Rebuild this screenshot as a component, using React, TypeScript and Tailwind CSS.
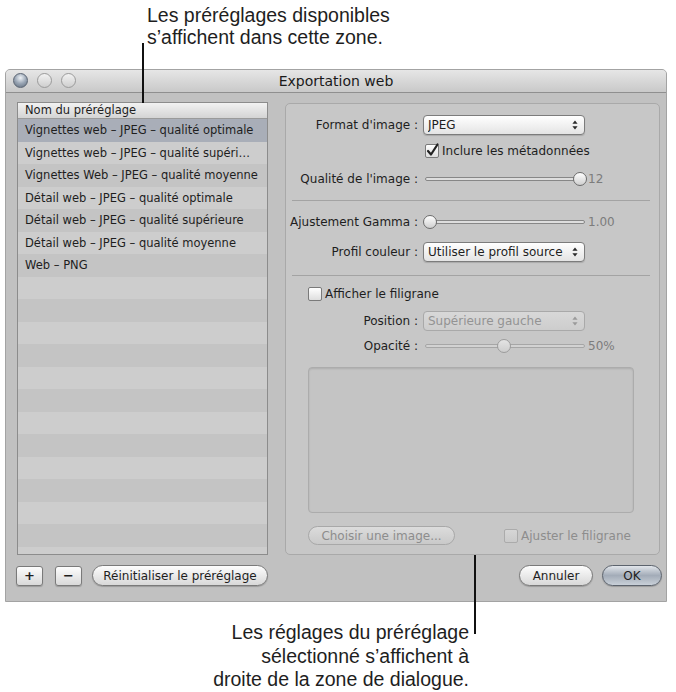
import React from 'react'

const UI = "font-['DejaVu_Sans','Liberation_Sans',sans-serif] text-[12px] text-[#1e1e1e]"

const presets = [
  'Vignettes web – JPEG – qualité optimale',
  'Vignettes web – JPEG – qualité supéri…',
  'Vignettes Web – JPEG – qualité moyenne',
  'Détail web – JPEG – qualité optimale',
  'Détail web – JPEG – qualité supérieure',
  'Détail web – JPEG – qualité moyenne',
  'Web – PNG',
]

export default function App() {
  const rows = [...presets, ...Array.from({ length: 14 }, () => '')]
  return (
    <div className="relative w-[676px] h-[692px] bg-white overflow-hidden">
      {/* top callout */}
      <div className="h-[69px] pl-[147px] pt-[4px] font-['Liberation_Sans',Arial,sans-serif] text-[19.5px] leading-[22px] text-[#1e1e1e]">
        <p>Les préréglages disponibles</p>
        <p>s’affichent dans cette zone.</p>
      </div>

      {/* window */}
      <div className={`ml-[5px] w-[662px] h-[533px] flex flex-col bg-[#c1c1c1] border border-[#a3a3a3] rounded-t-[5px] ${UI}`}>
        <div className="h-[23px] shrink-0 grid grid-cols-[1fr_auto_1fr] items-center border-b border-[#8f8f8f] rounded-t-[4px] bg-linear-to-b from-[#e6e6e6] to-[#c9c9c9]">
          <div className="flex gap-[9px] pl-[7px] -mt-[2px]">
            <span className="w-[15px] h-[15px] rounded-full border border-[#5b6573] bg-[radial-gradient(circle_at_50%_30%,#eef2f6_0%,#9aa6b5_50%,#5f6b7b_100%)]" />
            <span className="w-[15px] h-[15px] rounded-full border border-[#9a9a9a] bg-linear-to-b from-[#f2f2f2] to-[#cfcfcf]" />
            <span className="w-[15px] h-[15px] rounded-full border border-[#9a9a9a] bg-linear-to-b from-[#f2f2f2] to-[#cfcfcf]" />
          </div>
          <div className="text-[14px] text-[#1a1a1a]">Exportation web</div>
          <div />
        </div>

        <div className="flex pt-[9px] pl-[11px] pr-[6px] gap-[17px]">
          {/* preset list */}
          <div className="w-[251px] h-[453px] border border-[#8c8c8c] bg-[#c3c3c3] overflow-hidden text-[11.5px]">
            <div className="h-[16px] border-b border-[#9a9a9a] bg-linear-to-b from-[#f2f2f2] to-[#d4d4d4] pl-[7px] leading-[15px]">
              Nom du préréglage
            </div>
            {rows.map((r, i) => (
              <div
                key={i}
                className={`h-[22.5px] leading-[22.5px] pl-[7px] pr-[2px] whitespace-nowrap overflow-hidden ${
                  i === 0 ? 'bg-[#a9aeb8]' : i % 2 === 0 ? 'bg-[#c4c4c4]' : 'bg-[#cdcdcd]'
                }`}
              >
                {r}
              </div>
            ))}
          </div>

          {/* settings group */}
          <div className="mt-[1px] w-[375px] h-[452px] rounded-[5px] border border-[#a9a9a9] bg-[#c7c7c7] pt-[11px]">
            <Row className="h-[20px]" label="Format d'image :">
              <PopUp value="JPEG" />
            </Row>
            <div className="mt-[8px] h-[16px] pl-[139px] flex items-center gap-[3px]">
              <CheckBox checked />
              <span>Inclure les métadonnées</span>
            </div>
            <Row className="mt-[12px] h-[16px]" label="Qualité de l'image :">
              <Slider knob="left-[150px]" />
              <Value>12</Value>
            </Row>
            <Sep />
            <Row className="mt-[13px] h-[16px]" label="Ajustement Gamma :">
              <Slider knob="left-0" />
              <Value>1.00</Value>
            </Row>
            <Row className="mt-[12px] h-[20px]" label="Profil couleur :">
              <PopUp value="Utiliser le profil source" />
            </Row>
            <Sep />
            <div className="mt-[10px] h-[16px] pl-[22px] flex items-center gap-[3px]">
              <CheckBox />
              <span>Afficher le filigrane</span>
            </div>
            <Row className="mt-[9px] h-[20px]" label="Position :">
              <PopUp value="Supérieure gauche" disabled />
            </Row>
            <Row className="mt-[7px] h-[16px]" label="Opacité :">
              <Slider knob="left-[74px]" disabled />
              <Value>50%</Value>
            </Row>
            <div className="mt-[13px] ml-[22px] w-[326px] h-[146px] rounded-[4px] border border-[#acacac] bg-[#c4c4c4] shadow-[inset_0_1px_2px_rgba(0,0,0,0.12)]" />
            <div className="mt-[13px] pl-[22px] h-[19px] flex items-center">
              <div className="w-[147px] h-[19px] rounded-full border border-[#a8a8a8] bg-linear-to-b from-[#dcdcdc] to-[#c9c9c9] text-[#8d8d8d] flex items-center justify-center">
                Choisir une image...
              </div>
              <div className="ml-[49px] flex items-center gap-[3px] text-[#8d8d8d]">
                <CheckBox disabled />
                <span>Ajuster le filigrane</span>
              </div>
            </div>
          </div>
        </div>

        {/* bottom buttons */}
        <div className="flex items-center pt-[10px] pl-[10px] pr-[4px]">
          <SquareBtn>+</SquareBtn>
          <SquareBtn className="ml-[12px]">−</SquareBtn>
          <Pill className="ml-[10px] w-[176px]">Réinitialiser le préréglage</Pill>
          <Pill className="ml-auto w-[74px]">Annuler</Pill>
          <Pill className="ml-[9px] w-[60px]" primary>OK</Pill>
        </div>
      </div>

      {/* bottom callout */}
      <div className="mt-[19px] w-[469px] text-right font-['Liberation_Sans',Arial,sans-serif] text-[19.5px] leading-[23.5px] text-[#1e1e1e]">
        <p>Les réglages du préréglage</p>
        <p>sélectionné s’affichent à</p>
        <p>droite de la zone de dialogue.</p>
      </div>

      {/* leader lines */}
      <div className="absolute left-[142px] top-[43px] w-[2px] h-[60px] bg-[#111]" />
      <div className="absolute left-[474px] top-[555px] w-[2px] h-[79px] bg-[#111]" />
    </div>
  )
}

function Row({ label, className, children }: { label: string; className?: string; children: React.ReactNode }) {
  return (
    <div className={`flex items-center ${className ?? ''}`}>
      <div className="w-[132px] shrink-0 text-right whitespace-nowrap">{label}</div>
      <div className="ml-[5px] flex items-center">{children}</div>
    </div>
  )
}

function Sep() {
  return <div className="mt-[13px] ml-[6px] mr-[9px] border-t border-[#a3a3a3]" />
}

function Value({ children }: { children: React.ReactNode }) {
  return <span className="ml-[3px] text-[#7c7c7c]">{children}</span>
}

function Arrows({ color }: { color: string }) {
  return (
    <svg width="6" height="10" viewBox="0 0 6 10">
      <path d="M3 0.5 L5.6 3.8 H0.4 Z M3 9.5 L0.4 6.2 H5.6 Z" fill={color} />
    </svg>
  )
}

function PopUp({ value, disabled }: { value: string; disabled?: boolean }) {
  return (
    <div
      className={`w-[162px] h-[20px] rounded-[4px] border flex items-center justify-between pl-[4px] pr-[6px] ${
        disabled
          ? 'border-[#a9a9a9] bg-linear-to-b from-[#d8d8d8] to-[#cdcdcd] text-[#939393]'
          : 'border-[#7c7c7c] bg-linear-to-b from-[#ffffff] to-[#e4e4e4] shadow-[0_1px_1px_rgba(0,0,0,0.15)]'
      }`}
    >
      <span className="truncate">{value}</span>
      <Arrows color={disabled ? '#9a9a9a' : '#2a2a2a'} />
    </div>
  )
}

function CheckBox({ checked, disabled }: { checked?: boolean; disabled?: boolean }) {
  return (
    <span
      className={`relative w-[14px] h-[14px] shrink-0 rounded-[2px] border ${
        disabled
          ? 'border-[#ababab] bg-linear-to-b from-[#d6d6d6] to-[#cacaca]'
          : 'border-[#7a7a7a] bg-linear-to-b from-[#ffffff] to-[#dedede]'
      }`}
    >
      {checked && (
        <svg className="absolute -left-[1px] -top-[3px]" width="15" height="16" viewBox="0 0 15 16">
          <path d="M3 9 L6 12.5 L12.5 2.5" fill="none" stroke="#222" strokeWidth="2.2" strokeLinecap="round" strokeLinejoin="round" />
        </svg>
      )}
    </span>
  )
}

function Slider({ knob, disabled }: { knob: string; disabled?: boolean }) {
  return (
    <div className="relative w-[162px] h-[16px]">
      <div
        className={`absolute left-[2px] right-0 top-[6px] h-[4px] rounded-full border ${
          disabled ? 'border-[#a6a6a6] bg-[#d2d2d2]' : 'border-[#878787] bg-[#dedede]'
        }`}
      />
      <div
        className={`absolute top-[1px] w-[14px] h-[14px] rounded-full border ${knob} ${
          disabled
            ? 'border-[#9c9c9c] bg-linear-to-b from-[#e4e4e4] to-[#cdcdcd]'
            : 'border-[#6c6c6c] bg-linear-to-b from-[#ffffff] to-[#cfcfcf]'
        }`}
      />
    </div>
  )
}

function SquareBtn({ children, className }: { children: React.ReactNode; className?: string }) {
  return (
    <div
      className={`w-[27px] h-[20px] rounded-[3px] border border-[#7a7a7a] bg-linear-to-b from-[#fdfdfd] to-[#d9d9d9] flex items-center justify-center font-bold text-[13px] leading-none shadow-[0_1px_1px_rgba(0,0,0,0.2)] ${className ?? ''}`}
    >
      {children}
    </div>
  )
}

function Pill({ children, className, primary }: { children: React.ReactNode; className?: string; primary?: boolean }) {
  return (
    <div
      className={`h-[21px] rounded-full border flex items-center justify-center shadow-[0_1px_1px_rgba(0,0,0,0.2)] ${
        primary
          ? 'border-[#5c636d] bg-linear-to-b from-[#e2e6eb] via-[#a3acb8] to-[#c9d0d8]'
          : 'border-[#7a7a7a] bg-linear-to-b from-[#fdfdfd] to-[#d8d8d8]'
      } ${className ?? ''}`}
    >
      {children}
    </div>
  )
}
